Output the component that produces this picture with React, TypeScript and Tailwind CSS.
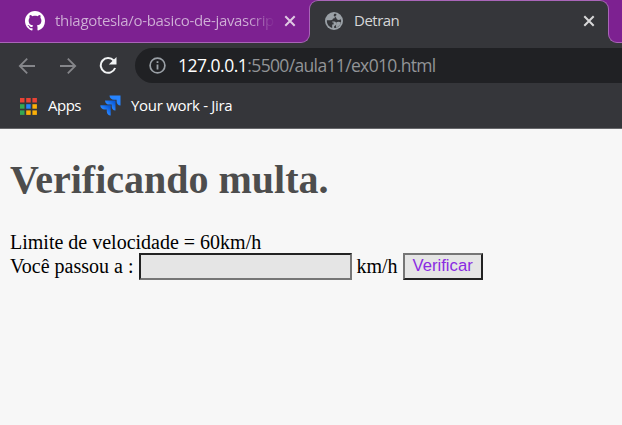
import React from "react";

const Close = ({ className }: { className: string }) => (
  <svg className={className} width="12" height="12" viewBox="0 0 12 12" fill="none" stroke="currentColor" strokeWidth="2">
    <path d="M1.3 1.3 10.7 10.7M10.7 1.3 1.3 10.7" />
  </svg>
);

const GitHub = () => (
  <svg width="20" height="20" viewBox="0 0 16 16" fill="#fff" className="shrink-0">
    <path d="M8 0C3.58 0 0 3.58 0 8c0 3.54 2.29 6.53 5.47 7.59.4.07.55-.17.55-.38 0-.19-.01-.82-.01-1.49-2.01.37-2.53-.49-2.69-.94-.09-.23-.48-.94-.82-1.13-.28-.15-.68-.52-.01-.53.63-.01 1.08.58 1.23.82.72 1.21 1.87.87 2.33.66.07-.52.28-.87.51-1.07-1.78-.2-3.64-.89-3.64-3.95 0-.87.31-1.59.82-2.15-.08-.2-.36-1.02.08-2.12 0 0 .67-.21 2.2.82.64-.18 1.32-.27 2-.27s1.36.09 2 .27c1.53-1.04 2.2-.82 2.2-.82.44 1.1.16 1.92.08 2.12.51.56.82 1.27.82 2.15 0 3.07-1.87 3.75-3.65 3.95.29.25.54.73.54 1.48 0 1.07-.01 1.93-.01 2.2 0 .21.15.46.55.38A8.01 8.01 0 0 0 16 8c0-4.42-3.58-8-8-8Z" />
  </svg>
);

const Globe = () => (
  <svg width="18" height="18" viewBox="0 0 18 18" className="shrink-0">
    <circle cx="9" cy="9" r="9" fill="#9aa0a6" />
    <path d="M9.2 1.9C8.2 3.2 8.6 4 9.8 4.4c.3 1.7-.5 2.1-1.8 2.2-.3 1.3-1 1.7-2.3 1.5v1.4h3.6c1.4.2 1.9 1 1.9 2.5 0 1.2-.8 1.8-2 1.9v2.2c3.4-.1 6.9-3 6.9-7.1 0-.7-.1-1.3-.3-1.7-1 .8-2.7.9-3.6.3-.9-.6-.5-2-1.5-2.3-.8-.4-.6-1.5.5-1.7.2-.6.3-1.1.1-1.5-.8-.2-1.4-.3-2.1-.2Z" fill="#35363a" />
    <path d="M1.9 8.3h3.5c1.4 0 2 .9 2 2.2h1.2v2H7.2v3.4C3.8 15.1 1.6 12 1.9 8.3Z" fill="#35363a" />
    <path d="M11.2 10.4c1.2-.9 3.6-.8 4.7.2-.6 2.3-2.3 4.3-4.9 5.1Z" fill="#9aa0a6" />
  </svg>
);

const Arrow = ({ className }: { className: string }) => (
  <svg width="18" height="18" viewBox="0 0 18 18" fill="none" stroke="#85868a" strokeWidth="1.8" className={className}>
    <path d="M17 9H2M9.2 1.6 1.8 9l7.4 7.4" />
  </svg>
);

const Reload = () => (
  <svg width="18" height="18" viewBox="0 0 18 18" fill="none" className="ml-[22px]">
    <path d="M14.7 3.5A7.4 7.4 0 1 0 16.1 11" stroke="#f1f3f4" strokeWidth="2" />
    <path d="M17.5 0v7.6H9.8Z" fill="#f1f3f4" />
  </svg>
);

const Info = () => (
  <svg width="17" height="17" viewBox="0 0 17 17" fill="none" className="ml-[14px]">
    <circle cx="8.5" cy="8.5" r="7.4" stroke="#9aa0a6" strokeWidth="1.7" />
    <path d="M8.5 7.4v5M8.5 4.3v1.8" stroke="#9aa0a6" strokeWidth="1.8" />
  </svg>
);

const Jira = () => (
  <svg width="21" height="21" viewBox="0 0 21 21" className="ml-[19px]">
    <defs>
      <linearGradient id="fold" x1="1" y1="0" x2="0" y2="1">
        <stop offset=".15" stopColor="#0a5ad8" />
        <stop offset=".55" stopColor="#2684ff" />
      </linearGradient>
    </defs>
    <path d="M9.5.5H20.5V10.5C18 10.5 16.6 8.6 16.6 6.5V4.8H14C11.5 4.8 9.5 3 9.5.5Z" fill="#2684ff" />
    <path d="M5 5.4H15.5V15.5C13 15.5 11.7 13.6 11.7 11.5V9.6H9.4C7 9.6 5 7.9 5 5.4Z" fill="url(#fold)" />
    <path d="M.3 10.3H10.7V20.5C8.2 20.5 6.8 18.5 6.8 16.4V14.5H4.7C2.2 14.5 .3 12.8 .3 10.3Z" fill="url(#fold)" />
  </svg>
);

const dots = [
  "#ea4335", "#ea4335", "#ea4335",
  "#34a853", "#2684fc", "#fbaf08",
  "#34a853", "#fbaf08", "#fbaf08",
];

const AppsGrid = () => (
  <svg width="17" height="17" viewBox="0 0 17 17" className="mt-px">
    {dots.map((c, i) => (
      <rect key={i} x={(i % 3) * 6.2} y={Math.floor(i / 3) * 6.2} width="4.5" height="4.5" fill={c} />
    ))}
  </svg>
);

export default function App() {
  return (
    <div className="flex h-[425px] w-[622px] flex-col overflow-hidden bg-[#f7f7f7] font-['Open_Sans',sans-serif]">
      <div className="flex h-[43px] shrink-0 bg-[#7d2191]">
        <div className="relative flex w-[309px] shrink-0 items-center border-b border-[#a965b8] pl-[25px]">
          <GitHub />
          <div className="ml-[10px] w-[220px] whitespace-nowrap bg-gradient-to-r from-[#cfb0d6] from-88% to-transparent bg-clip-text pb-[2px] text-[15px] tracking-[-0.32px] text-transparent">
            thiagotesla/o-basico-de-javascrip
          </div>
          <Close className="ml-[9px] shrink-0 text-[#dfc9e3]" />
          <div className="absolute -right-px -bottom-px z-10 h-[9px] w-[9px] bg-[#35363a]">
            <div className="h-full w-full rounded-br-[9px] border-r border-b border-[#a965b8] bg-[#7d2191]" />
          </div>
        </div>
        <div className="flex w-[300px] shrink-0 items-center rounded-t-[9px] border-x border-t border-[#a965b8] bg-[#35363a] pb-[2px] pl-[15px]">
          <Globe />
          <span className="ml-[11px] pb-px text-[15px] tracking-[-0.5px] text-[#d5d6d8]">Detran</span>
          <Close className="mr-[13px] ml-auto text-[#d8d8d9]" />
        </div>
        <div className="relative flex-1 border-b border-[#a965b8]">
          <div className="absolute -bottom-px -left-px h-[9px] w-[9px] bg-[#35363a]">
            <div className="h-full w-full rounded-bl-[9px] border-b border-l border-[#a965b8] bg-[#7d2191]" />
          </div>
        </div>
      </div>

      <div className="flex h-[45px] shrink-0 items-center bg-[#35363a] pl-[18px]">
        <Arrow className="" />
        <Arrow className="ml-[23px] rotate-180" />
        <Reload />
        <div className="ml-[18px] flex h-[35px] flex-1 items-center rounded-l-full bg-[#202124]">
          <Info />
          <span className="ml-[12px] text-[17.5px] tracking-[-0.65px] text-[#929497]">
            <span className="tracking-[-0.5px] text-white">127.0.0.1</span>:5500/aula11/ex010.html
          </span>
        </div>
      </div>

      <div className="flex h-[41px] shrink-0 items-center border-b border-[#66676a] bg-[#35363a] pb-[5px] pl-[20px] text-[15px] text-white">
        <AppsGrid />
        <span className="ml-[11px] tracking-[-0.5px]">Apps</span>
        <Jira />
        <span className="ml-[10px] tracking-[-0.3px]">Your work - Jira</span>
      </div>

      <main className="px-[10px] font-['Liberation_Serif',serif] text-[20px] leading-[24px] text-black">
        <h1 className="mt-[28px] mb-[27px] text-[40px] leading-[46px] font-bold text-[#4d4d4d]">Verificando multa.</h1>
        <p>Limite de velocidade = 60km/h</p>
        <div className="-mt-px flex items-start whitespace-pre">
          <span className="pt-px">Você passou a : </span>
          <input
            aria-label="Velocidade"
            className="h-[27px] w-[213px] border-2 border-t-[#222] border-r-[#767676] border-b-[#767676] border-l-[#222] bg-[#e5e5e5] outline-none"
          />
          <span className="pt-px"> km/h </span>
          <button className="h-[27px] w-[80px] border-2 border-t-[#767676] border-r-[#222] border-b-[#222] border-l-[#767676] bg-[#e5e5e5] pb-[2px] font-['Liberation_Sans',sans-serif] text-[16.67px] leading-[21px] text-[#8a2be2]">
            Verificar
          </button>
        </div>
      </main>
    </div>
  );
}
